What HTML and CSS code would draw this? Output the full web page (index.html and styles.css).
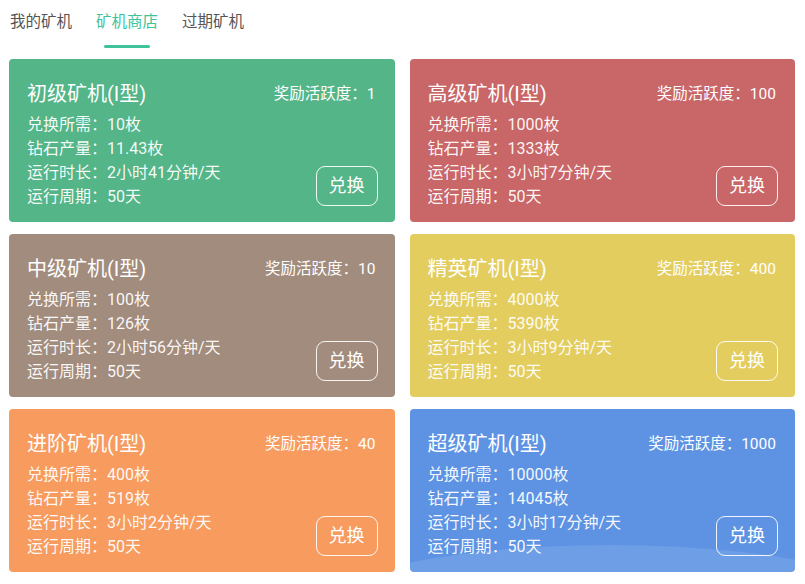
FILE: index.html
```html
<!DOCTYPE html>
<html lang="zh-CN">
<head>
    <meta charset="UTF-8">
    <meta name="viewport" content="width=device-width, initial-scale=1.0">
    <title>矿机商店</title>
    <link rel="stylesheet" href="styles.css">
</head>
<body>
    <div class="tabs">
        <div class="tab">我的矿机</div>
        <div class="tab current">矿机商店<i></i></div>
        <div class="tab">过期矿机</div>
    </div>

    <div class="list">
        <div class="card green">
            <div class="card_head">
                <span class="title">初级矿机(I型)</span>
                <span class="reward">奖励活跃度：1</span>
            </div>
            <div class="card_body">
                <ul>
                    <li>兑换所需：10枚</li>
                    <li>钻石产量：11.43枚</li>
                    <li>运行时长：2小时41分钟/天</li>
                    <li>运行周期：50天</li>
                </ul>
                <div class="btn">兑换</div>
            </div>
        </div>
        <div class="card red">
            <div class="card_head">
                <span class="title">高级矿机(I型)</span>
                <span class="reward">奖励活跃度：100</span>
            </div>
            <div class="card_body">
                <ul>
                    <li>兑换所需：1000枚</li>
                    <li>钻石产量：1333枚</li>
                    <li>运行时长：3小时7分钟/天</li>
                    <li>运行周期：50天</li>
                </ul>
                <div class="btn">兑换</div>
            </div>
        </div>
        <div class="card brown">
            <div class="card_head">
                <span class="title">中级矿机(I型)</span>
                <span class="reward">奖励活跃度：10</span>
            </div>
            <div class="card_body">
                <ul>
                    <li>兑换所需：100枚</li>
                    <li>钻石产量：126枚</li>
                    <li>运行时长：2小时56分钟/天</li>
                    <li>运行周期：50天</li>
                </ul>
                <div class="btn">兑换</div>
            </div>
        </div>
        <div class="card yellow">
            <div class="card_head">
                <span class="title">精英矿机(I型)</span>
                <span class="reward">奖励活跃度：400</span>
            </div>
            <div class="card_body">
                <ul>
                    <li>兑换所需：4000枚</li>
                    <li>钻石产量：5390枚</li>
                    <li>运行时长：3小时9分钟/天</li>
                    <li>运行周期：50天</li>
                </ul>
                <div class="btn">兑换</div>
            </div>
        </div>
        <div class="card orange">
            <div class="card_head">
                <span class="title">进阶矿机(I型)</span>
                <span class="reward">奖励活跃度：40</span>
            </div>
            <div class="card_body">
                <ul>
                    <li>兑换所需：400枚</li>
                    <li>钻石产量：519枚</li>
                    <li>运行时长：3小时2分钟/天</li>
                    <li>运行周期：50天</li>
                </ul>
                <div class="btn">兑换</div>
            </div>
        </div>
        <div class="card blue">
            <div class="card_head">
                <span class="title">超级矿机(I型)</span>
                <span class="reward">奖励活跃度：1000</span>
            </div>
            <div class="card_body">
                <ul>
                    <li>兑换所需：10000枚</li>
                    <li>钻石产量：14045枚</li>
                    <li>运行时长：3小时17分钟/天</li>
                    <li>运行周期：50天</li>
                </ul>
                <div class="btn">兑换</div>
            </div>
        </div>
    </div>
</body>
</html>
```

FILE: styles.css
```css
* {
    margin: 0;
    padding: 0;
    box-sizing: border-box;
}

body {
    background-color: #fff;
    font-family: Roboto, "Noto Sans CJK SC", sans-serif;
}

li {
    list-style-type: none;
}

.tabs {
    display: flex;
    gap: 24px;
    padding: 12px 0 0 10px;
    height: 59px;
}

.tab {
    display: flex;
    flex-direction: column;
    align-items: center;
    width: 62px;
    font-size: 15.5px;
    line-height: 20px;
    color: #555;
}

.tab.current {
    color: #3ec39c;
}

.tab i {
    display: block;
    width: 46px;
    height: 3px;
    margin-top: 13px;
    border-radius: 2px;
    background-color: #3ec39c;
}

.list {
    display: grid;
    grid-template-columns: 1fr 1fr;
    column-gap: 15px;
    row-gap: 12px;
    padding: 0 10px 0 9px;
}

.card {
    position: relative;
    overflow: hidden;
    height: 163px;
    padding: 19px 17px 13px 18px;
    border-radius: 4px;
    color: #fff;
}

.green { background-color: #53b588; }
.red { background-color: #c96667; }
.brown { background-color: #a28c7d; }
.yellow { background-color: #e3cd5f; }
.orange { background-color: #f79b5f; }
.blue { background-color: #5e93e4; }

/* 底部浅色弧线 */
.blue::after {
    content: "";
    position: absolute;
    left: -120px;
    top: 136px;
    width: 640px;
    height: 160px;
    border-radius: 50%;
    background-color: rgba(255, 255, 255, 0.1);
}

.card_head {
    display: flex;
    justify-content: space-between;
    align-items: center;
    height: 28px;
    margin-bottom: 7px;
}

.title {
    font-size: 20px;
}

.reward {
    font-size: 15.5px;
    margin-right: 2px;
}

.card_body {
    position: relative;
    z-index: 1;
    display: flex;
    justify-content: space-between;
    align-items: flex-end;
}

.card_body li {
    font-size: 16px;
    line-height: 24px;
    color: rgba(255, 255, 255, 0.95);
}

.btn {
    width: 62px;
    height: 40px;
    margin-bottom: 3px;
    border: 1px solid rgba(255, 255, 255, 0.9);
    border-radius: 9px;
    text-align: center;
    line-height: 38px;
    font-size: 18px;
}
```
